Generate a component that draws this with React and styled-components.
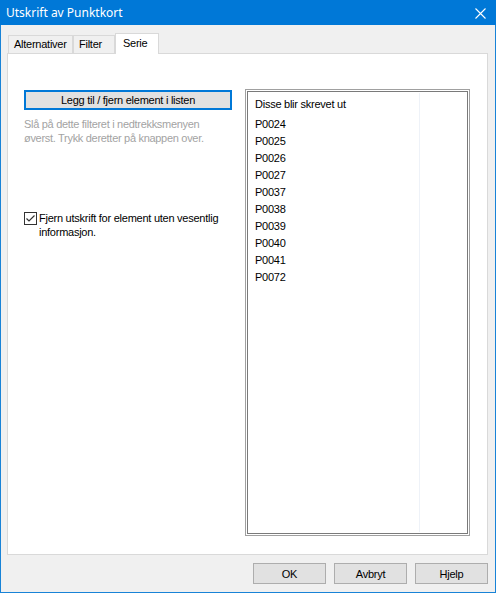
import styled, { createGlobalStyle } from "styled-components";

const GlobalStyle = createGlobalStyle`
  html, body {
    margin: 0;
    padding: 0;
    background: #f0f0f0;
  }
  * {
    box-sizing: border-box;
  }
`;

const items = [
  "P0024",
  "P0025",
  "P0026",
  "P0027",
  "P0037",
  "P0038",
  "P0039",
  "P0040",
  "P0041",
  "P0072",
];

const App = () => {
  return (
    <>
      <GlobalStyle />
      <Window>
        <TitleBar>
          <Title>Utskrift av Punktkort</Title>
          <CloseIcon width="11" height="11" viewBox="0 0 11 11">
            <path d="M0.5 0.5 L10.5 10.5 M10.5 0.5 L0.5 10.5" stroke="#fff" strokeWidth="1.1" />
          </CloseIcon>
        </TitleBar>
        <Body>
          <TabStrip>
            <Tab $width={65}>Alternativer</Tab>
            <Tab $width={42}>Filter</Tab>
            <Tab $width={44} $active>
              Serie
            </Tab>
          </TabStrip>
          <Panel>
            <LeftColumn>
              <PushButton>Legg til / fjern element i listen</PushButton>
              <HintText>
                Slå på dette filteret i nedtrekksmenyen
                <br />
                øverst. Trykk deretter på knappen over.
              </HintText>
              <CheckRow>
                <CheckBox>
                  <svg width="11" height="11" viewBox="0 0 11 11">
                    <path d="M1.5 5.5 L4 8 L9.5 2.5" fill="none" stroke="#333" strokeWidth="1.2" />
                  </svg>
                </CheckBox>
                <CheckLabel>
                  Fjern utskrift for element uten vesentlig
                  <br />
                  informasjon.
                </CheckLabel>
              </CheckRow>
            </LeftColumn>
            <ListBox>
              <ListColumn>
                <ListHeader>Disse blir skrevet ut</ListHeader>
                {items.map((item) => (
                  <ListItem key={item}>{item}</ListItem>
                ))}
              </ListColumn>
              <ListFiller />
            </ListBox>
          </Panel>
          <Footer>
            <DialogButton>OK</DialogButton>
            <DialogButton>Avbryt</DialogButton>
            <DialogButton>Hjelp</DialogButton>
          </Footer>
        </Body>
      </Window>
    </>
  );
};

const Window = styled.div`
  width: 496px;
  height: 593px;
  display: flex;
  flex-direction: column;
  background: #f0f0f0;
  border: 1px solid #1883d7;
  border-top: none;
  font-family: "Liberation Sans", Arial, sans-serif;
  font-size: 11px;
  letter-spacing: -0.25px;
  color: #000;
`;

const TitleBar = styled.div`
  height: 25px;
  margin: 0 -1px;
  padding: 0 10px 0 6px;
  display: flex;
  align-items: center;
  justify-content: space-between;
  background: #0078d7;
  flex-shrink: 0;
`;

const Title = styled.span`
  color: #fff;
  font-family: "Noto Sans", "Liberation Sans", sans-serif;
  font-size: 12px;
  letter-spacing: 0;
  margin-top: -1px;
`;

const CloseIcon = styled.svg`
  display: block;
  margin-top: 1px;
`;

const Body = styled.div`
  flex: 1;
  display: flex;
  flex-direction: column;
  padding: 8px 7px 8px 6px;
`;

const TabStrip = styled.div`
  display: flex;
  align-items: flex-end;
  height: 20px;
  padding-left: 1px;
  position: relative;
  z-index: 1;
`;

const Tab = styled.div`
  width: ${({ $width }) => $width}px;
  height: ${({ $active }) => ($active ? "21px" : "18px")};
  margin-bottom: ${({ $active }) => ($active ? "-1px" : "0")};
  padding: ${({ $active }) => ($active ? "3px 0 0 7px" : "2px 0 0 5px")};
  background: ${({ $active }) => ($active ? "#fff" : "#f0f0f0")};
  border: 1px solid #d9d9d9;
  border-bottom: none;
  & + & {
    border-left: ${({ $active }) => ($active ? "1px solid #d9d9d9" : "none")};
  }
  white-space: nowrap;
  overflow: hidden;
`;

const Panel = styled.div`
  height: 502px;
  background: #fff;
  border: 1px solid #d9d9d9;
  padding: 35px 16px 18px 16px;
  display: grid;
  grid-template-columns: 208px 225px;
  column-gap: 13px;
`;

const LeftColumn = styled.div`
  display: flex;
  flex-direction: column;
  padding-top: 1px;
`;

const PushButton = styled.div`
  height: 20px;
  border: 2px solid #0078d7;
  background: #e1e1e1;
  display: flex;
  align-items: center;
  justify-content: center;
`;

const HintText = styled.div`
  margin-top: 7px;
  color: #a3a3a3;
  line-height: 14px;
  letter-spacing: -0.3px;
`;

const CheckRow = styled.div`
  margin-top: 66px;
  display: flex;
  align-items: flex-start;
  gap: 2px;
`;

const CheckBox = styled.div`
  width: 13px;
  height: 13px;
  margin-top: 1px;
  border: 1px solid #333;
  background: #fff;
  display: flex;
  align-items: center;
  justify-content: center;
  flex-shrink: 0;
`;

const CheckLabel = styled.div`
  line-height: 14px;
`;

const ListBox = styled.div`
  display: flex;
  border: 1px solid #a0a0a0;
  box-shadow: inset 0 0 0 1px #fff, inset 0 0 0 2px #7a7a7a;
  padding: 3px;
`;

const ListColumn = styled.div`
  width: 171px;
  border-right: 1px solid #eef2f8;
  display: flex;
  flex-direction: column;
`;

const ListFiller = styled.div`
  flex: 1;
`;

const ListHeader = styled.div`
  height: 22px;
  padding-left: 6px;
  display: flex;
  align-items: center;
`;

const ListItem = styled.div`
  height: 17px;
  padding-left: 6px;
  display: flex;
  align-items: center;
`;

const Footer = styled.div`
  display: flex;
  justify-content: flex-end;
  gap: 8px;
  margin-top: 8px;
`;

const DialogButton = styled.div`
  width: 73px;
  height: 21px;
  background: #e1e1e1;
  border: 1px solid #adadad;
  display: flex;
  align-items: center;
  justify-content: center;
`;

export default App;
